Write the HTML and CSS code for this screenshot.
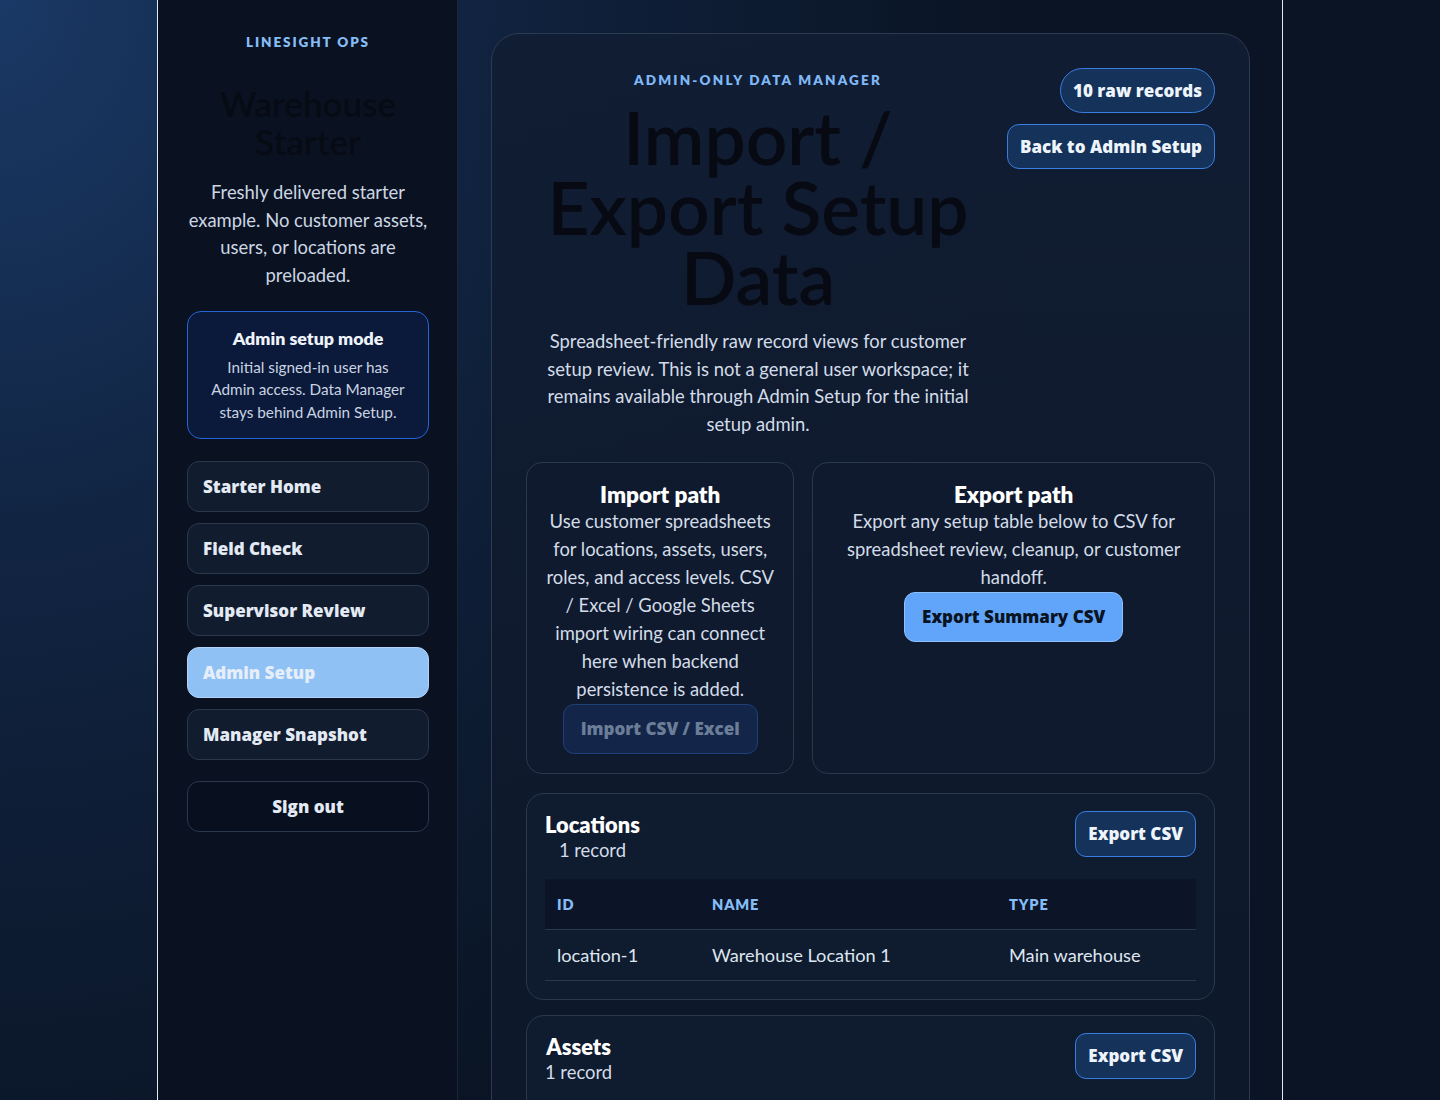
FILE: index.html
```html
<!DOCTYPE html>
<html lang="en">
<head>
<meta charset="utf-8">
<title>Import / Export Setup Data</title>
<link rel="stylesheet" href="styles.css">
</head>
<body>
<div class="shell">
  <aside class="sidebar">
    <div class="brand">LINESIGHT OPS</div>
    <h1 class="side-title">Warehouse Starter</h1>
    <p class="side-desc">Freshly delivered starter example. No customer assets, users, or locations are preloaded.</p>
    <div class="mode-card">
      <strong class="mode-title">Admin setup mode</strong>
      <p class="mode-text">Initial signed-in user has Admin access. Data Manager stays behind Admin Setup.</p>
    </div>
    <nav class="nav">
      <button class="nav-btn">Starter Home</button>
      <button class="nav-btn">Field Check</button>
      <button class="nav-btn">Supervisor Review</button>
      <button class="nav-btn active">Admin Setup</button>
      <button class="nav-btn">Manager Snapshot</button>
    </nav>
    <button class="signout">Sign out</button>
  </aside>

  <main class="main">
    <section class="panel">
      <header class="panel-head">
        <div class="head-text">
          <div class="eyebrow">ADMIN-ONLY DATA MANAGER</div>
          <h2 class="title">Import / Export Setup Data</h2>
          <p class="lead">Spreadsheet-friendly raw record views for customer setup review. This is not a general user workspace; it remains available through Admin Setup for the initial setup admin.</p>
        </div>
        <div class="head-actions">
          <span class="pill">10 raw records</span>
          <button class="btn-outline">Back to Admin Setup</button>
        </div>
      </header>

      <div class="paths">
        <div class="path-card">
          <h3 class="path-title">Import path</h3>
          <p class="path-text">Use customer spreadsheets for locations, assets, users, roles, and access levels. CSV / Excel / Google Sheets import wiring can connect here when backend persistence is added.</p>
          <button class="btn-disabled" disabled>Import CSV / Excel</button>
        </div>
        <div class="path-card">
          <h3 class="path-title">Export path</h3>
          <p class="path-text">Export any setup table below to CSV for spreadsheet review, cleanup, or customer handoff.</p>
          <button class="btn-primary">Export Summary CSV</button>
        </div>
      </div>

      <div class="tables">
        <div class="table-card">
          <div class="table-head">
            <div class="table-name">
              <h3>Locations</h3>
              <span>1 record</span>
            </div>
            <button class="btn-small">Export CSV</button>
          </div>
          <table class="data">
            <thead>
              <tr><th class="c1">ID</th><th class="c2">NAME</th><th>TYPE</th></tr>
            </thead>
            <tbody>
              <tr><td>location-1</td><td>Warehouse Location 1</td><td>Main warehouse</td></tr>
            </tbody>
          </table>
        </div>
        <div class="table-card">
          <div class="table-head">
            <div class="table-name">
              <h3>Assets</h3>
              <span>1 record</span>
            </div>
            <button class="btn-small">Export CSV</button>
          </div>
          <table class="data">
            <thead>
              <tr><th class="c1">ID</th><th class="c2">NAME</th><th>LOCATION</th></tr>
            </thead>
            <tbody>
              <tr><td>asset-1</td><td>Warehouse Asset 1</td><td>location-1</td></tr>
            </tbody>
          </table>
        </div>
      </div>
    </section>
  </main>
</div>
</body>
</html>
```

FILE: styles.css
```css
* { box-sizing: border-box; }

html, body { margin: 0; padding: 0; }

body {
  font-family: Lato, "Noto Sans", sans-serif;
  color: #d5deea;
  background:
    radial-gradient(ellipse 1000px 1250px at 0 0, #1a3966 0%, rgba(22, 48, 88, 0.55) 45%, rgba(11, 21, 38, 0) 100%),
    #0a1424;
  min-height: 1100px;
}

.shell {
  width: 1126px;
  margin: 0 auto;
  min-height: 1100px;
  display: grid;
  grid-template-columns: 300px 1fr;
  border-left: 1px solid #e4e9f0;
  border-right: 1px solid #e4e9f0;
}

/* Sidebar */
.sidebar {
  background: #0a1222;
  border-right: 1px solid #1a2538;
  padding: 34px 28px 40px 29px;
  display: flex;
  flex-direction: column;
  text-align: center;
}

.brand {
  font-size: 13.5px;
  font-weight: 800;
  letter-spacing: 0.14em;
  line-height: 16px;
  color: #86bdf7;
}

.side-title {
  margin: 34px 0 0;
  font-size: 35px;
  line-height: 38px;
  font-weight: 600;
  color: #070b14;
}

.side-desc {
  margin: 19px 0 0;
  font-size: 18.4px;
  line-height: 27.7px;
  color: #cdd6e3;
}

.mode-card {
  margin-top: 21px;
  background: #0b1a3b;
  border: 1px solid #2563d9;
  border-radius: 14px;
  padding: 14px 18px 15px;
}

.mode-title {
  display: block;
  font-size: 17.8px;
  line-height: 25px;
  font-weight: 800;
  color: #eef3fa;
}

.mode-text {
  margin: 5px 0 0;
  font-size: 15.3px;
  line-height: 22.5px;
  color: #c9d3e1;
}

.nav {
  margin-top: 22px;
  display: flex;
  flex-direction: column;
  gap: 11px;
}

.nav-btn,
.signout,
.pill,
.btn-outline,
.btn-primary,
.btn-disabled,
.btn-small {
  font-family: "Open Sans", Lato, sans-serif;
  font-weight: 800;
  font-size: 17px;
}

.nav-btn,
.signout {
  line-height: 25px;
  color: #e3eaf4;
  background: #111c2f;
  border: 1px solid #2a384e;
  border-radius: 12px;
  padding: 12px 15px;
  text-align: left;
  cursor: pointer;
}

.nav-btn.active {
  background: #90c1f5;
  border-color: #b3d4f8;
  color: #e6eef9;
}

.signout {
  margin-top: 21px;
  background: #08101f;
  text-align: center;
}

/* Main */
.main {
  padding: 33px 32px 40px 33px;
}

.panel {
  background: linear-gradient(180deg, rgba(17, 29, 51, 0.92), rgba(13, 23, 41, 0.96));
  border: 1px solid #2c3a52;
  border-radius: 28px;
  padding: 34px 34px 40px;
}

.panel-head {
  display: flex;
  gap: 17px;
  align-items: flex-start;
}

.head-text {
  flex: 1;
  text-align: center;
}

.eyebrow {
  font-size: 13.5px;
  font-weight: 800;
  letter-spacing: 0.16em;
  line-height: 20px;
  color: #7fb8f6;
  margin-top: 2px;
}

.title {
  margin: 12px 0 0;
  font-size: 73px;
  line-height: 70px;
  font-weight: 600;
  color: #070a13;
}

.lead {
  margin: 16px 0 0;
  font-size: 18.4px;
  line-height: 27.7px;
  color: #d3dce8;
}

.head-actions {
  display: flex;
  flex-direction: column;
  align-items: flex-end;
  gap: 11px;
}

.pill,
.btn-outline {
  line-height: 23px;
  color: #eef4fb;
  background: #14325a;
  border: 1px solid #3a7ee2;
  padding: 10px 12px;
}

.pill {
  border-radius: 999px;
  display: inline-block;
}

.btn-outline {
  border-radius: 12px;
  cursor: pointer;
}

/* Paths */
.paths {
  margin-top: 23px;
  display: grid;
  grid-template-columns: 2fr 3fr;
  gap: 18px;
}

.path-card {
  background: #0f1a2e;
  border: 1px solid #2a384e;
  border-radius: 16px;
  padding: 20px 16px 19px;
  text-align: center;
}

.path-title {
  margin: 0;
  font-size: 22.5px;
  line-height: 24px;
  font-weight: 800;
  color: #ffffff;
}

.path-text {
  margin: 0;
  font-size: 18.4px;
  line-height: 28px;
  color: #d3dce8;
}

.btn-primary,
.btn-disabled {
  line-height: 26px;
  padding: 11px 17px;
  border-radius: 11px;
  margin-top: 1px;
}

.btn-primary {
  background: #60a5fa;
  border: 1px solid #8cc0fb;
  color: #0a1322;
  cursor: pointer;
}

.btn-disabled {
  background: #13264a;
  border: 1px solid #1f3f77;
  color: #6c7e97;
}

/* Tables */
.tables {
  margin-top: 19px;
  display: flex;
  flex-direction: column;
  gap: 15px;
}

.table-card {
  background: #0f1b2f;
  border: 1px solid #2a384e;
  border-radius: 18px;
  padding: 17px 18px 18px;
}

.table-head {
  display: flex;
  justify-content: space-between;
  align-items: flex-start;
}

.table-name {
  display: flex;
  flex-direction: column;
  align-items: center;
  padding-top: 2px;
}

.table-name h3 {
  margin: 0;
  font-size: 21.8px;
  line-height: 24px;
  font-weight: 800;
  color: #ffffff;
}

.table-name span {
  font-size: 18.4px;
  line-height: 26px;
  color: #d3dce8;
}

.btn-small {
  line-height: 24px;
  color: #eef4fb;
  background: #14325a;
  border: 1px solid #3a7ee2;
  border-radius: 11px;
  padding: 10px 12px;
  cursor: pointer;
}

.data {
  margin-top: 16px;
  width: 100%;
  border-collapse: collapse;
  text-align: left;
}

.data th {
  background: #0b1527;
  font-size: 14.5px;
  font-weight: 800;
  letter-spacing: 0.06em;
  color: #86bdf7;
  height: 51px;
  padding: 0 12px;
  border-bottom: 1px solid #2a384e;
}

.data th.c1 { width: 155px; }
.data th.c2 { width: 297px; }

.data td {
  font-size: 18.2px;
  color: #dfe6f0;
  height: 51px;
  padding: 0 12px;
  border-bottom: 1px solid #2a384e;
}
```
